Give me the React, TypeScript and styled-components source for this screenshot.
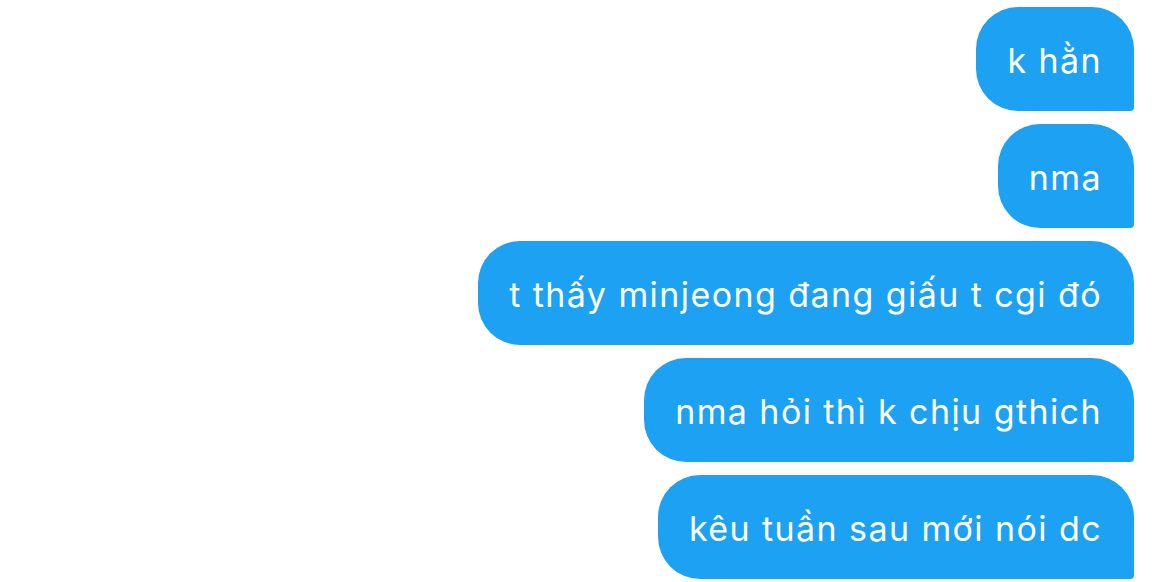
import { createGlobalStyle, styled } from 'styled-components';

const GlobalStyle = createGlobalStyle`
  html, body {
    margin: 0;
    padding: 0;
    background: #ffffff;
  }
`;

const messages = [
  'k hằn',
  'nma',
  't thấy minjeong đang giấu t cgi đó',
  'nma hỏi thì k chịu gthich',
  'kêu tuần sau mới nói dc',
];

function App() {
  return (
    <>
      <GlobalStyle />
      <Thread>
        {messages.map((text) => (
          <Row key={text}>
            <Bubble>{text}</Bubble>
          </Row>
        ))}
      </Thread>
    </>
  );
}

export default App;

const Thread = styled.div`
  display: flex;
  flex-direction: column;
  gap: 13px;
  width: 1170px;
  padding: 7px 36px 0 0;
  box-sizing: border-box;
`;

const Row = styled.div`
  display: flex;
  justify-content: flex-end;
`;

const Bubble = styled.div`
  display: flex;
  align-items: center;
  height: 104px;
  box-sizing: border-box;
  padding: 2px 32px 0 31px;
  background: #1da1f2;
  color: #ffffff;
  font-family: Inter, 'Noto Sans', sans-serif;
  font-size: 34px;
  letter-spacing: 1.42px;
  border-radius: 42px 42px 4px 42px;
  white-space: nowrap;
`;
